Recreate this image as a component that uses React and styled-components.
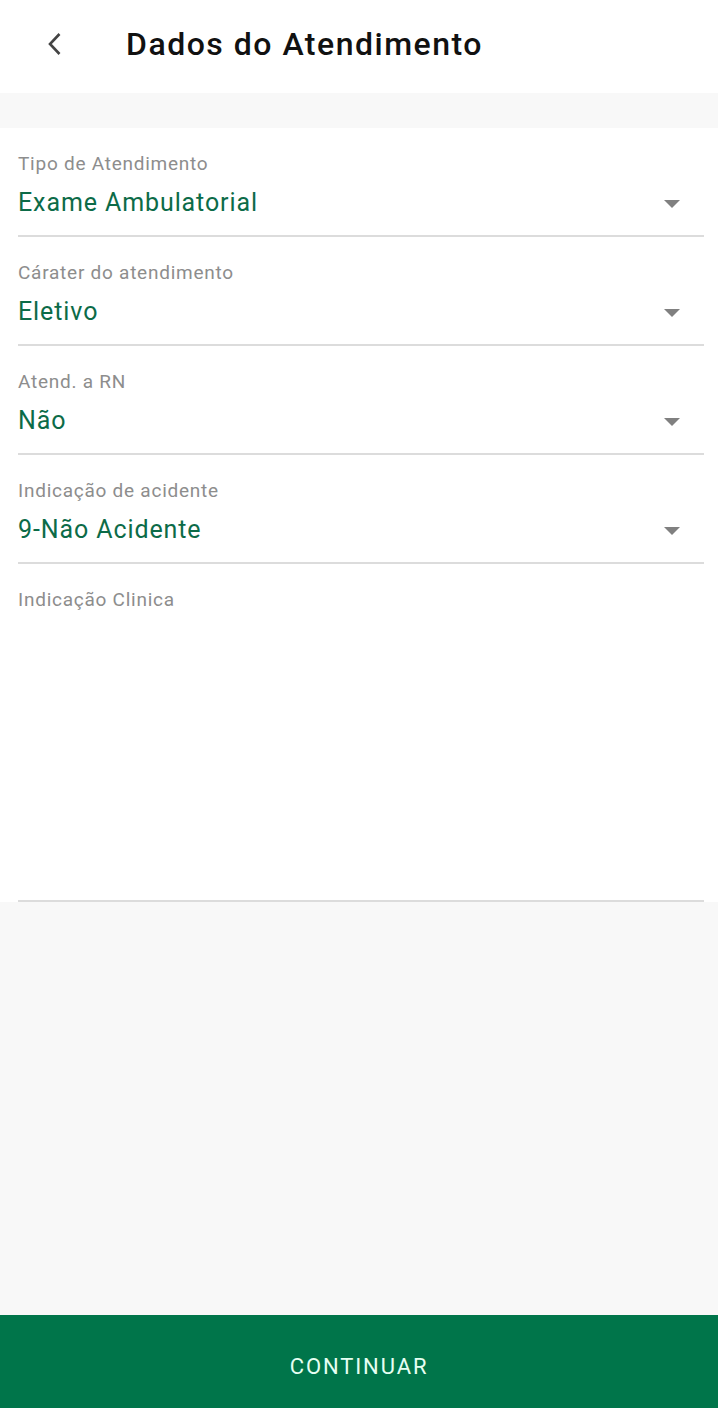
import React from "react"
import styled, { createGlobalStyle } from "styled-components"

const Global = createGlobalStyle`
  html, body { margin: 0; padding: 0; }
  body { font-family: Roboto, "Noto Sans", sans-serif; background: #f8f8f8; }
`;

const Page = styled.div`
  width: 718px;
  height: 1408px;
  display: flex;
  flex-direction: column;
  background: #f8f8f8;
`;

const Header = styled.header`
  height: 93px;
  background: #fff;
  display: flex;
  align-items: center;
`;

const BackButton = styled.button`
  width: 126px;
  height: 93px;
  padding: 0 0 6px 44px;
  border: none;
  background: transparent;
  display: flex;
  align-items: center;
  justify-content: flex-start;
  box-sizing: border-box;
`;

const Title = styled.h1`
  margin: 0 0 6px 0;
  font-size: 32px;
  font-weight: 500;
  color: #111;
  letter-spacing: 1.5px;
`;

const Spacer = styled.div`
  height: 35px;
`;

const Form = styled.section`
  background: #fff;
  padding: 0 14px 0 18px;
`;

const Field = styled.div`
  padding-top: 25px;
  padding-bottom: ${p => (p.$tall ? "0" : "16px")};
  border-bottom: 2px solid #dcdcdc;
  display: flex;
  flex-direction: column;
  height: ${p => (p.$tall ? "338px" : "auto")};
  box-sizing: border-box;
`;

const Label = styled.label`
  font-size: 19px;
  line-height: 22px;
  color: #8d8d8d;
  letter-spacing: 0.75px;
`;

const ValueRow = styled.div`
  margin-top: 12px;
  height: 32px;
  display: flex;
  align-items: center;
  justify-content: space-between;
`;

const Value = styled.span`
  font-size: 25px;
  line-height: 32px;
  color: #0c6b48;
  letter-spacing: 0.9px;
`;

const Caret = styled.span`
  width: 0;
  height: 0;
  margin-right: 24px;
  margin-top: 2px;
  border-left: 8px solid transparent;
  border-right: 8px solid transparent;
  border-top: 8px solid #808080;
`;

const Fill = styled.div`
  flex: 1;
`;

const ContinueButton = styled.button`
  height: 93px;
  border: none;
  background: #00754a;
  color: #e6fff2;
  font-family: Roboto, sans-serif;
  font-size: 22px;
  letter-spacing: 1.9px;
  padding: 9px 0 0 0;
`;

const fields = [
  { label: "Tipo de Atendimento", value: "Exame Ambulatorial" },
  { label: "Cárater do atendimento", value: "Eletivo" },
  { label: "Atend. a RN", value: "Não" },
  { label: "Indicação de acidente", value: "9-Não Acidente" },
];

export default function App() {
  return (
    <Page>
      <Global />
      <Header>
        <BackButton aria-label="Voltar">
          <svg width="24" height="24" viewBox="0 0 24 24">
            <path d="M15.5 2 L6 12 L15.5 22" fill="none" stroke="#444" strokeWidth="2.6" />
          </svg>
        </BackButton>
        <Title>Dados do Atendimento</Title>
      </Header>
      <Spacer />
      <Form>
        {fields.map(f => (
          <Field key={f.label}>
            <Label>{f.label}</Label>
            <ValueRow>
              <Value>{f.value}</Value>
              <Caret />
            </ValueRow>
          </Field>
        ))}
        <Field $tall>
          <Label>Indicação Clinica</Label>
        </Field>
      </Form>
      <Fill />
      <ContinueButton>CONTINUAR</ContinueButton>
    </Page>
  );
}
